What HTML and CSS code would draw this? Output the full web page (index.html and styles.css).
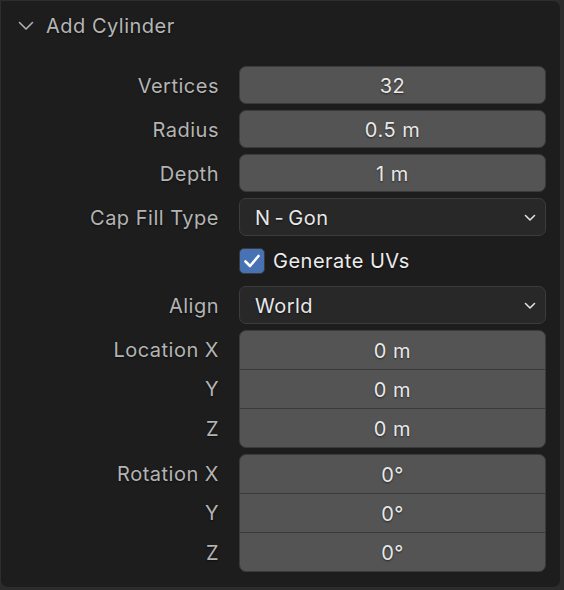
FILE: index.html
```html
<!DOCTYPE html>
<html>
<head>
<meta charset="utf-8">
<link rel="stylesheet" href="styles.css">
</head>
<body>
<div class="panel">
  <div class="header">
    <svg class="chev" width="16" height="10" viewBox="0 0 16 10"><path d="M1.5 1.5 L8 8 L14.5 1.5" fill="none" stroke="#b0b0b0" stroke-width="1.6" stroke-linecap="round" stroke-linejoin="round"/></svg>
    <span class="title">Add Cylinder</span>
  </div>
  <div class="body">
    <div class="row"><div class="label">Vertices</div><div class="num">32</div></div>
    <div class="row"><div class="label">Radius</div><div class="num">0.5 m</div></div>
    <div class="row"><div class="label">Depth</div><div class="num">1 m</div></div>
    <div class="row"><div class="label">Cap Fill Type</div><div class="menu"><span>N<span class="dash">-</span>Gon</span><svg width="12" height="8" viewBox="0 0 12 8"><path d="M1.5 1.5 L6 6 L10.5 1.5" fill="none" stroke="#e0e0e0" stroke-width="1.6" stroke-linecap="round" stroke-linejoin="round"/></svg></div></div>
    <div class="row"><div class="label"></div><div class="check"><span class="box"><svg width="18" height="16" viewBox="0 0 18 16"><path d="M2.5 8.5 L7 13 L15.5 3" fill="none" stroke="#fff" stroke-width="2.6" stroke-linecap="round" stroke-linejoin="round"/></svg></span><span class="ctext">Generate UVs</span></div></div>
    <div class="row"><div class="label">Align</div><div class="menu"><span>World</span><svg width="12" height="8" viewBox="0 0 12 8"><path d="M1.5 1.5 L6 6 L10.5 1.5" fill="none" stroke="#e0e0e0" stroke-width="1.6" stroke-linecap="round" stroke-linejoin="round"/></svg></div></div>
    <div class="group">
      <div class="glabels"><div>Location X</div><div>Y</div><div>Z</div></div>
      <div class="gfields"><div>0 m</div><div>0 m</div><div>0 m</div></div>
    </div>
    <div class="group">
      <div class="glabels"><div>Rotation X</div><div>Y</div><div>Z</div></div>
      <div class="gfields"><div>0°</div><div>0°</div><div>0°</div></div>
    </div>
  </div>
</div>
</body>
</html>
```
FILE: styles.css
```css
html, body {
  margin: 0;
  padding: 0;
  background: #2c2c2c;
  width: 564px;
  height: 590px;
  overflow: hidden;
}
.panel {
  box-sizing: border-box;
  width: 561px;
  height: 588px;
  background: #1d1d1d;
  border: 1px solid #2e2e2e;
  border-radius: 0 8px 8px 8px;
  font-family: Inter, "Noto Sans", sans-serif;
  font-size: 20px;
  letter-spacing: 0.5px;
  text-shadow: 0 1px 2px rgba(0,0,0,0.55);
}
.header {
  display: flex;
  align-items: center;
  height: 50px;
  padding-left: 17px;
  gap: 12px;
  color: #b6b6b6;
}
.title { font-size: 20px; }
.body {
  padding-top: 15px;
  display: flex;
  flex-direction: column;
  gap: 6px;
}
.row {
  display: grid;
  grid-template-columns: 218px 307px;
  column-gap: 20px;
  height: 38px;
  align-items: center;
}
.label {
  text-align: right;
  color: #b4b4b4;
  padding-top: 1px;
}
.num {
  box-sizing: border-box;
  height: 38px;
  padding-top: 1px;
  background: #545454;
  border: 1px solid #3a3a3a;
  border-radius: 7px;
  color: #e8e8e8;
  display: flex;
  align-items: center;
  justify-content: center;
}
.menu {
  box-sizing: border-box;
  height: 38px;
  background: #282828;
  border: 1px solid #3c3c3c;
  border-radius: 7px;
  color: #e8e8e8;
  display: flex;
  align-items: center;
  justify-content: space-between;
  padding: 1px 9px 0 15px;
}
.dash { padding: 0 4px; }
.check {
  display: flex;
  align-items: center;
  gap: 8px;
  color: #ececec;
}
.box {
  box-sizing: border-box;
  width: 26px;
  height: 26px;
  background: #4772b3;
  border: 1px solid #3a3a3a;
  border-radius: 5px;
  display: flex;
  align-items: center;
  justify-content: center;
}
.group {
  display: grid;
  grid-template-columns: 218px 307px;
  column-gap: 20px;
}
.glabels {
  display: flex;
  flex-direction: column;
  color: #b4b4b4;
  text-align: right;
}
.glabels div {
  height: 39.33px;
  line-height: 40px;
}
.gfields {
  box-sizing: border-box;
  background: #545454;
  border: 1px solid #3a3a3a;
  border-radius: 7px;
  overflow: hidden;
  display: flex;
  flex-direction: column;
  color: #e8e8e8;
}
.gfields div {
  height: 39px;
  padding-top: 1px;
  display: flex;
  align-items: center;
  justify-content: center;
  border-top: 1px solid #3a3a3a;
  box-sizing: border-box;
}
.gfields div:first-child {
  border-top: none;
  height: 38px;
}
```
